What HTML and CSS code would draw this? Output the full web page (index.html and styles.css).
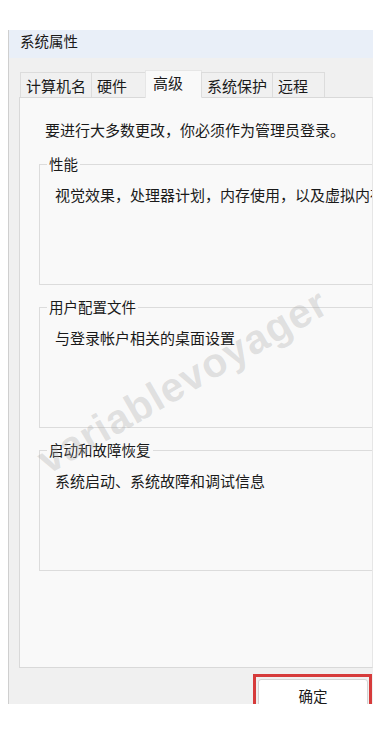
FILE: index.html
```html
<!DOCTYPE html>
<html lang="zh-CN">
<head>
<meta charset="utf-8">
<title>系统属性</title>
<link rel="stylesheet" href="styles.css">
</head>
<body>
<div class="window">
  <div class="titlebar">系统属性</div>
  <div class="tabs">
    <div class="tab tab-name">计算机名</div>
    <div class="tab tab-hw">硬件</div>
    <div class="tab tab-adv active">高级</div>
    <div class="tab tab-prot">系统保护</div>
    <div class="tab tab-remote">远程</div>
  </div>
  <div class="panel">
    <p class="notice">要进行大多数更改，你必须作为管理员登录。</p>
    <div class="group">
      <div class="legend">性能</div>
      <p class="desc">视觉效果，处理器计划，内存使用，以及虚拟内存</p>
    </div>
    <div class="group">
      <div class="legend">用户配置文件</div>
      <p class="desc">与登录帐户相关的桌面设置</p>
    </div>
    <div class="group">
      <div class="legend">启动和故障恢复</div>
      <p class="desc">系统启动、系统故障和调试信息</p>
    </div>
  </div>
  <div class="footer">
    <div class="highlight">
      <button class="btn">确定</button>
    </div>
  </div>
  <div class="watermark">variablevoyager</div>
</div>
</body>
</html>
```

FILE: styles.css
```css
html, body {
  margin: 0;
  padding: 0;
  background: #ffffff;
}
body {
  font-family: "Noto Sans CJK SC", "Noto Sans", sans-serif;
  color: #1a1a1a;
}
.window {
  position: relative;
  margin: 30px 0 0 8px;
  width: 364px;
  height: 674px;
  border-left: 1px solid #cfcfcf;
  background: #f0f0f0;
  overflow: hidden;
  display: flex;
  flex-direction: column;
}
.titlebar {
  flex: none;
  height: 28px;
  background: #e9eff8;
  font-size: 14.5px;
  line-height: 22px;
  padding-left: 11px;
  box-sizing: border-box;
}
.tabs {
  flex: none;
  display: flex;
  align-items: flex-end;
  padding-left: 11px;
  margin-top: 12px;
  height: 27px;
  position: relative;
  z-index: 1;
}
.tab {
  height: 25px;
  box-sizing: border-box;
  border: 1px solid #dcdcdc;
  border-bottom: none;
  background: #f0f0f0;
  font-size: 15px;
  line-height: 25px;
  padding: 0 0 0 5px;
  margin-right: -1px;
  white-space: nowrap;
}
.tab-name { width: 72px; }
.tab-hw { width: 55px; }
.tab-adv { width: 57px; }
.tab-prot { width: 72px; }
.tab-remote { width: 53px; }
.tab.active {
  height: 28px;
  background: #f9f9f9;
  margin-bottom: -1px;
  padding-left: 7px;
  line-height: 24px;
  border-color: #e6e6e6;
}
.panel {
  margin-left: 10px;
  height: 571px;
  flex: none;
  box-sizing: border-box;
  background: #f9f9f9;
  border: 1px solid #d9d9d9;
  border-right-color: #e6e6e6;
  overflow: hidden;
  padding: 20px 0 0 19px;
}
.notice {
  margin: 0 0 0 6px;
  font-size: 15px;
  line-height: 24px;
  white-space: nowrap;
}
.group {
  margin-top: 22px;
  width: 400px;
  height: 121px;
  box-sizing: border-box;
  border: 1px solid #dcdcdc;
  position: relative;
}
.legend {
  position: absolute;
  left: 7px;
  top: -12px;
  padding: 0 2px;
  background: #f9f9f9;
  font-size: 14.5px;
  line-height: 22px;
}
.desc {
  margin: 19px 0 0 15px;
  font-size: 15px;
  line-height: 22px;
  white-space: nowrap;
}
.footer {
  flex: 1;
  min-height: 0;
  display: flex;
  justify-content: flex-end;
  align-items: flex-start;
  padding: 6px 1px 0 0;
}
.highlight {
  flex: none;
  border: 3px solid #d63b3b;
  padding: 2px 1px 0 2px;
}
.btn {
  display: block;
  width: 110px;
  height: 30px;
  box-sizing: border-box;
  background: #ffffff;
  border: 1px solid #d4d4d4;
  border-radius: 3px;
  font-family: "Noto Sans CJK SC", sans-serif;
  font-size: 14.5px;
  line-height: 22px;
  color: #1a1a1a;
  padding: 3px 0 0;
}
.watermark {
  position: absolute;
  left: 10px;
  top: 328px;
  font-family: "Liberation Sans", Arial, sans-serif;
  font-weight: bold;
  font-size: 41px;
  color: rgba(170, 170, 170, 0.33);
  transform: rotate(-30deg);
  transform-origin: center;
  white-space: nowrap;
  letter-spacing: 1px;
  pointer-events: none;
}
```
